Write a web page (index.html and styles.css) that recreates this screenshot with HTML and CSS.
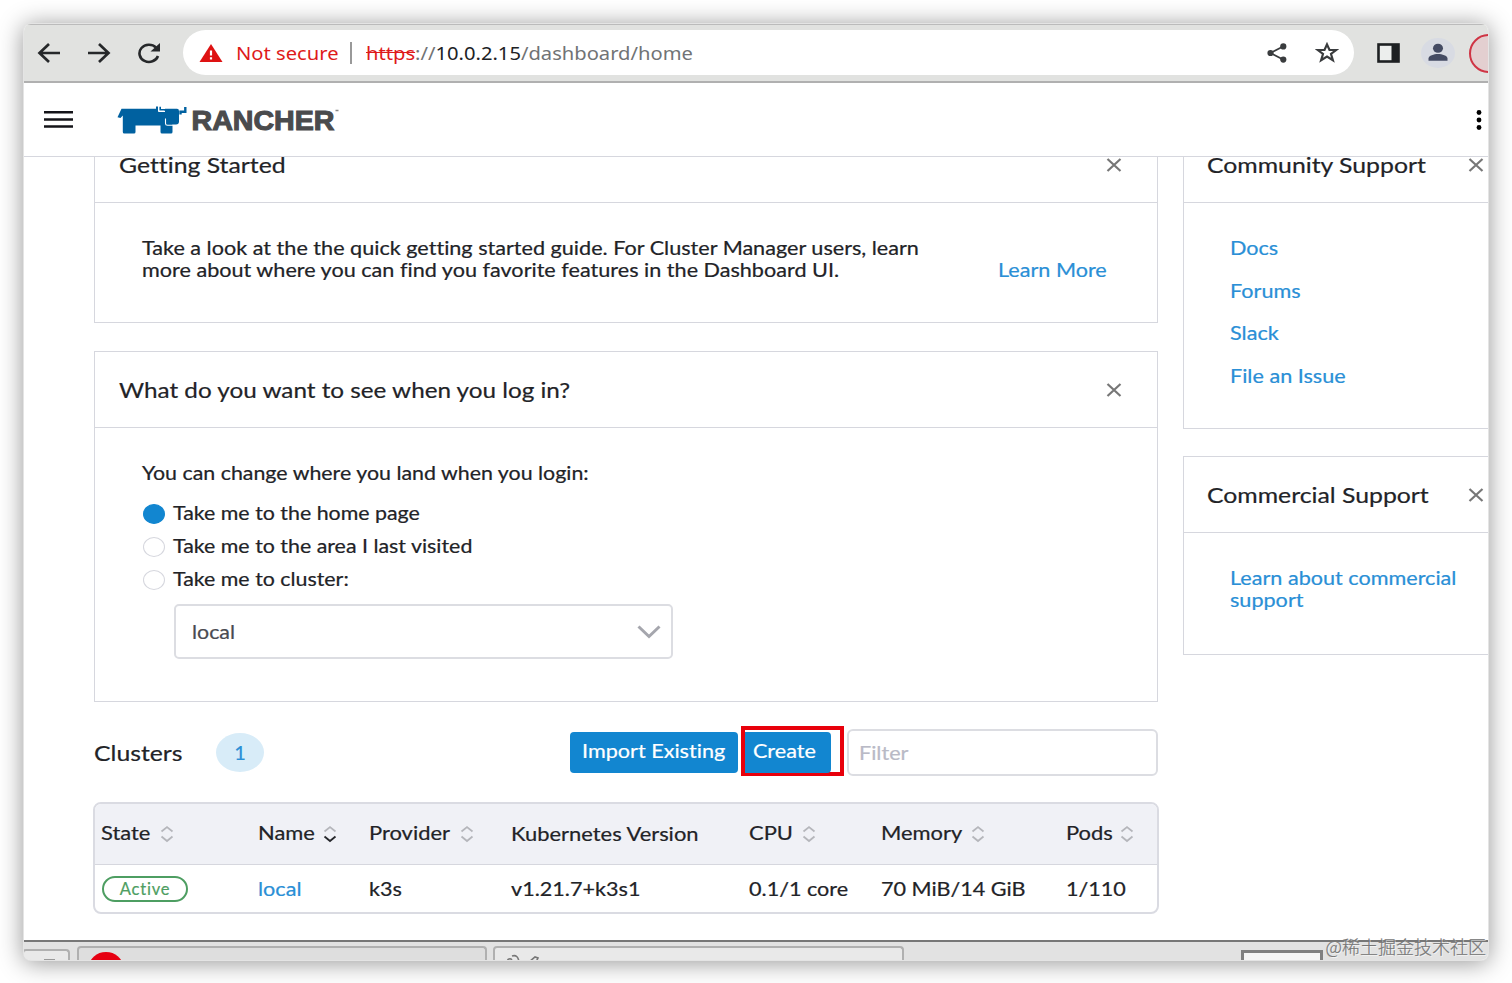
FILE: index.html
```
<!DOCTYPE html>
<html lang="en">
<head>
  <meta charset="UTF-8" />
  <meta name="viewport" content="width=device-width, initial-scale=1.0"/>
  <title>Rancher</title>
  <link rel="stylesheet" href="styles.css">
</head>
<body>
  <svg class="defs" width="0" height="0">
    <symbol id="close" viewBox="0 0 16 14"><path d="M1.5 1L14.5 13M14.5 1L1.5 13" fill="none" stroke="#777" stroke-width="2.2"/></symbol>
    <symbol id="sort" viewBox="0 0 14 18">
      <path d="M1.5 6.5L7 2L12.5 6.5" fill="none" stroke="#b5b6bb" stroke-width="1.7"/>
      <path d="M1.5 11.5L7 16L12.5 11.5" fill="none" stroke="currentColor" stroke-width="1.8"/>
    </symbol>
  </svg>

  <div class="window">
    <div class="toolbar">
      <svg class="nav-icon" width="24" height="22" viewBox="0 0 24 22"><path d="M23 11H3M12 2L2.5 11L12 20" fill="none" stroke="#26282a" stroke-width="2.7"/></svg>
      <svg class="nav-icon" width="24" height="22" viewBox="0 0 24 22"><path d="M1 11H21M12 2L21.5 11L12 20" fill="none" stroke="#26282a" stroke-width="2.7"/></svg>
      <svg class="nav-icon" width="24" height="22" viewBox="0 0 24 22"><path d="M21 14A9.5 8.6 0 1 1 19 5.5" fill="none" stroke="#26282a" stroke-width="2.6"/><path d="M23 1V9.5H13.5z" fill="#26282a"/></svg>

      <div class="address">
        <svg class="warning" width="24" height="18" viewBox="0 0 24 18"><path d="M12 0L23.5 18H.5z" fill="#de1212"/><path d="M12 6.5V11.5M12 13.3V15.5" stroke="#fff" stroke-width="2.2"/></svg>
        <span class="not-secure"><span class="wide">Not secure</span></span>
        <span class="divider"></span>
        <span class="url"><span class="wide"><s>https</s>://<b>10.0.2.15</b>/dashboard/home</span></span>
        <svg class="share" width="20" height="20" viewBox="0 0 20 20"><path d="M16.5 3.3L3.5 10L16.5 16.7" fill="none" stroke="#3a3c3e" stroke-width="1.8"/><circle cx="16.3" cy="3.4" r="3.1" fill="#3a3c3e"/><circle cx="3.5" cy="10" r="3.1" fill="#3a3c3e"/><circle cx="16.3" cy="16.6" r="3.1" fill="#3a3c3e"/></svg>
        <svg width="24" height="21" viewBox="0 0 24 21"><path d="M12 2.4L14.5 8H21.2L16 12L17.9 18.3L12 14.6L6.1 18.3L8 12L2.8 8H9.5z" fill="none" stroke="#3a3c3e" stroke-width="2.2"/></svg>
      </div>

      <svg class="panel-icon" width="23" height="20" viewBox="0 0 23 20"><rect x="1.5" y="1.5" width="20" height="17" fill="#eceeed" stroke="#1d2022" stroke-width="2.6"/><rect x="14.500" y="1" width="7.500" height="18" fill="#1d2022"/></svg>
      <svg class="avatar" width="34" height="30" viewBox="0 0 34 30"><ellipse cx="17" cy="15" rx="17" ry="15" fill="#d8dbe3"/><ellipse cx="17" cy="10.3" rx="5" ry="4.5" fill="#444b63"/><path d="M7.5 22.8V20.5C7.5 17.5 13 16 17 16S26.5 17.5 26.5 20.5V22.8z" fill="#444b63"/></svg>
      <div class="update-pill"></div>
    </div>

    <div class="header">
      <svg class="menu" width="29" height="19" viewBox="0 0 29 19"><path d="M0 2.3H29M0 9.5H29M0 16.5H29" stroke="#141419" stroke-width="2.6"/></svg>
      <svg class="logo" width="226" height="32" viewBox="0 0 226 32">
        <path d="M4.5 4.8H39V2.5H41V7.5H46Q48 7.500 48 4.800H60Q62 4.800 62 7V17.500Q62 20.500 59 20.500H55.500V28Q55.500 29.500 54 29.500H45Q43.500 29.500 43.500 28V21.500H18.500V28Q18.500 29.500 17 29.500H7.300Q5.800 29.500 5.800 28V11.500L3.500 14L.5 13.300z" fill="#0061a0"/>
        <path d="M42 2.5V7.500H48M48.500 14.500V19.500Q48.500 21.300 50.500 21.300H56" fill="none" stroke="#fff" stroke-width="1.1"/>
        <path d="M43.200 2.800V5.800H48" fill="none" stroke="#0061a0" stroke-width="1.600"/>
        <path d="M63.500 10.500V7.800H68.300V3" fill="none" stroke="#0061a0" stroke-width="2.4"/>
        <text x="74.5" y="26" textLength="143" lengthAdjust="spacingAndGlyphs">RANCHER</text>
        <path d="M218.500 6.500H221.500" stroke="#888" stroke-width="1.400"/>
      </svg>
      <svg class="kebab" width="6" height="20" viewBox="0 0 6 20"><circle cx="3" cy="2.5" r="2.4"/><circle cx="3" cy="10" r="2.4"/><circle cx="3" cy="17.5" r="2.4"/></svg>
    </div>

    <div class="page">
      <div class="main">
        <div class="card getting-started">
          <div class="card-header"><h2>Getting Started</h2><svg class="close"><use href="#close"/></svg></div>
          <div class="card-body">
            <p class="wide">Take a look at the the quick getting started guide. For Cluster Manager users, learn<br>more about where you can find you favorite features in the Dashboard UI.</p>
            <a class="learn-more wide">Learn More</a>
          </div>
        </div>

        <div class="card login">
          <div class="card-header"><h2>What do you want to see when you log in?</h2><svg class="close"><use href="#close"/></svg></div>
          <div class="card-body">
            <p class="wide">You can change where you land when you login:</p>
            <div class="options">
              <label class="option"><i class="radio checked"></i><span class="wide">Take me to the home page</span></label>
              <label class="option"><i class="radio"></i><span class="wide">Take me to the area I last visited</span></label>
              <label class="option"><i class="radio"></i><span class="wide">Take me to cluster:</span></label>
            </div>
            <div class="select">
              <span class="wide">local</span>
              <svg width="24" height="14" viewBox="0 0 24 14"><path d="M1.5 1.5L12 11.5L22.5 1.5" fill="none" stroke="#a5a6ad" stroke-width="3"/></svg>
            </div>
          </div>
        </div>

        <div class="clusters-bar">
          <h2>Clusters</h2>
          <span class="count">1</span>
          <div class="actions">
            <button class="btn import"><span class="wide">Import Existing</span></button>
            <div class="highlight"><button class="btn create"><span class="wide">Create</span></button></div>
            <div class="filter"><span class="wide">Filter</span></div>
          </div>
        </div>

        <div class="table">
          <div class="row head">
            <div><span class="wide">State</span><svg class="sort sort-state"><use href="#sort"/></svg></div>
            <div><span class="wide">Name</span><svg class="sort sort-name"><use href="#sort"/></svg></div>
            <div><span class="wide">Provider</span><svg class="sort sort-provider"><use href="#sort"/></svg></div>
            <div class="plain"><span class="wide">Kubernetes Version</span></div>
            <div><span class="wide">CPU</span><svg class="sort sort-cpu"><use href="#sort"/></svg></div>
            <div><span class="wide">Memory</span><svg class="sort sort-memory"><use href="#sort"/></svg></div>
            <div><span class="wide">Pods</span><svg class="sort sort-pods"><use href="#sort"/></svg></div>
          </div>
          <div class="row">
            <div><span class="badge">Active</span></div>
            <div><a class="wide">local</a></div>
            <div><span class="wide">k3s</span></div>
            <div><span class="wide">v1.21.7+k3s1</span></div>
            <div><span class="wide">0.1/1 core</span></div>
            <div><span class="wide">70 MiB/14 GiB</span></div>
            <div><span class="wide">1/110</span></div>
          </div>
        </div>
      </div>

      <div class="side">
        <div class="card community">
          <div class="card-header"><h2>Community Support</h2><svg class="close"><use href="#close"/></svg></div>
          <div class="card-body">
            <a class="wide">Docs</a>
            <a class="wide">Forums</a>
            <a class="wide">Slack</a>
            <a class="wide">File an Issue</a>
          </div>
        </div>
        <div class="card commercial">
          <div class="card-header"><h2>Commercial Support</h2><svg class="close"><use href="#close"/></svg></div>
          <div class="card-body"><a class="wide">Learn about commercial<br>support</a></div>
        </div>
      </div>
    </div>

    <div class="taskbar">
      <div class="task small"><i class="dash"></i></div>
      <div class="task active"><i class="dot"></i></div>
      <div class="task second"><svg width="34" height="10" viewBox="0 0 34 10"><path d="M1 10Q2 6 5 7L7 10M6 4Q12 2 13 10M23 10L29 5L32 6L30 10" fill="none" stroke="#777" stroke-width="1.6"/></svg></div>
      <div class="workspace"></div>
    </div>
  </div>
  <div class="watermark">@稀土掘金技术社区</div>
</body>
</html>
```
FILE: styles.css
```
* {
  box-sizing: border-box;
}
body {
  margin: 0;
  padding: 24px;
  height: 983px;
  overflow: hidden;
  background: #fff;
  color: #222327;
  font-family: Lato, sans-serif;
  font-size: 18.5px;
  font-variant-ligatures: none;
  line-height: 22px;
  -webkit-text-stroke: 0.2px;
}
h2, p {
  margin: 0;
  font-weight: normal;
}
a {
  color: #2a8fd6;
}
svg {
  flex: none;
}
.defs {
  position: absolute;
}
/* the dashboard is displayed stretched horizontally */
.wide {
  display: inline-block;
  white-space: nowrap;
  transform: scaleX(1.168);
  transform-origin: left center;
}
.window {
  display: flex;
  flex-direction: column;
  width: 1464px;
  height: 936px;
  overflow: hidden;
  border-radius: 7px;
  background: #fff;
  box-shadow: 0 0 0 1px #e4e4e4, 0 2px 25px 1px rgba(0, 0, 0, 0.42);
}

/* browser toolbar */
.toolbar {
  display: flex;
  align-items: center;
  flex: none;
  height: 59px;
  padding-left: 13px;
  border-top: 1px solid #bbb;
  border-bottom: 2px solid #b0b0b0;
  background: #e1e2e0;
}
.toolbar > svg {
  margin-bottom: 1px;
}
.nav-icon {
  margin-right: 26px;
}
.address {
  display: flex;
  align-items: center;
  flex: none;
  width: 1171px;
  height: 45px;
  margin-left: -4px;
  margin-bottom: 1px;
  padding-left: 16px;
  border-radius: 23px;
  background: #fff;
  font-family: "Noto Sans", sans-serif;
  font-size: 18.5px;
  -webkit-text-stroke: 0;
}
.address .wide {
  transform: scaleX(1.09);
}
.not-secure {
  flex: none;
  width: 114px;
  margin-left: 13px;
  color: #de1a1a;
}
.divider {
  flex: none;
  width: 2px;
  height: 22px;
  background: #999;
}
.url {
  flex: none;
  width: 900px;
  margin-left: 14px;
  color: #717375;
}
.url s {
  color: #de1a1a;
}
.url b {
  color: #202124;
  font-weight: normal;
}
.share {
  margin-right: 28px;
  margin-left: 1px;
}
.panel-icon {
  margin-left: 23px;
}
.avatar {
  margin-left: 21px;
}
.update-pill {
  flex: none;
  width: 80px;
  height: 39px;
  margin-left: 14px;
  border: 2px solid #cf3545;
  border-radius: 20px;
  background: #e3cfd0;
}

/* rancher header */
.header {
  display: flex;
  align-items: center;
  flex: none;
  height: 74px;
  padding-left: 20px;
  border-bottom: 1px solid #d6d7de;
}
.logo {
  margin-left: 44px;
}
.logo text {
  font: bold 28px "Liberation Sans", Arial, sans-serif;
  fill: #4a4b4d;
  stroke: #4a4b4d;
  stroke-width: 1.1px;
}
.kebab {
  margin-left: 1133px;
}

/* page */
.page {
  display: flex;
  flex: none;
  gap: 25px;
  height: 783px;
  padding-left: 70px;
  overflow: hidden;
}
.main {
  flex: none;
  width: 1064px;
  margin-top: -31px;
}
.side {
  flex: none;
  width: 330px;
  margin-top: -31px;
}
.card {
  border: 1px solid #d6d7de;
}
.card-header {
  display: flex;
  align-items: center;
  justify-content: space-between;
  height: 76px;
  padding: 0 35px 0 24px;
  border-bottom: 1px solid #d6d7de;
}
h2 {
  font-size: 21px;
  line-height: 17px;
  white-space: nowrap;
  transform: scaleX(1.18);
  transform-origin: left center;
}
.close {
  width: 16px;
  height: 14px;
}
.card-body {
  padding: 34px 47px;
}
.getting-started {
  height: 197px;
}
.getting-started .card-body {
  display: flex;
  align-items: flex-end;
}
.getting-started p {
  width: 856px;
}
.learn-more {
  flex: none;
}
.login {
  height: 351px;
  margin-top: 28px;
}
.login h2 {
  transform: scaleX(1.155);
}
.login .wide {
  transform: scaleX(1.155);
}
.options {
  margin-top: 12px;
}
.option {
  display: flex;
  align-items: center;
  height: 33px;
}
.radio {
  width: 22px;
  height: 20px;
  margin: 2px 8px 0 1px;
  border: 1px solid #d6d7de;
  border-radius: 50%;
}
.radio.checked {
  border-color: #1286d0;
  background: #1286d0;
}
.select {
  display: flex;
  align-items: center;
  justify-content: space-between;
  width: 499px;
  height: 55px;
  margin: 9px 0 0 32px;
  padding: 0 10px 0 16px;
  border: 2px solid #dcdde2;
  border-radius: 5px;
  color: #4a4b52;
}
.community {
  height: 303px;
}
.community .card-body {
  display: flex;
  flex-direction: column;
  gap: 20.5px;
}
.commercial {
  height: 199px;
  margin-top: 27px;
}
.side .card-header {
  padding-left: 23px;
  padding-right: 28px;
}
.side .card-body {
  padding-left: 46px;
}

/* clusters */
.clusters-bar {
  display: flex;
  align-items: center;
  height: 50px;
  margin-top: 24px;
}
.clusters-bar h2 {
  width: 122px;
  padding-top: 3px;
}
.count {
  width: 48px;
  height: 39px;
  margin-top: 2px;
  border-radius: 50%;
  background: #d8ecf8;
  color: #2a8fd6;
  font-size: 20px;
  line-height: 39px;
  text-align: center;
}
.actions {
  display: flex;
  align-items: center;
  margin-left: 306px;
}
.btn {
  height: 41px;
  margin-top: 2px;
  padding: 0 0 2px 12px;
  border: 0;
  border-radius: 4px;
  background: #1286d0;
  color: #fff;
  font: inherit;
  text-align: left;
}
.import {
  width: 168px;
}
.highlight {
  display: flex;
  align-items: center;
  width: 103px;
  height: 50px;
  margin-left: 3px;
  border: 4px solid #e8000b;
}
.create {
  width: 86px;
  padding-left: 8px;
  border-radius: 0 4px 4px 0;
}
.filter {
  width: 311px;
  height: 47px;
  margin: 2px 0 0 3px;
  padding-left: 10px;
  border: 2px solid #dcdde2;
  border-radius: 6px;
  color: #b9bac6;
  line-height: 44px;
}
.table {
  width: 1066px;
  height: 112px;
  margin: 26px 0 0 -1px;
  border: 2px solid #dadbe2;
  border-radius: 8px;
  overflow: hidden;
}
.row {
  display: grid;
  grid-template-columns: 157px 111px 142px 238px 132px 185px 90px;
  align-items: center;
  height: 48px;
  padding-left: 6px;
}
.row.head {
  height: 61px;
  padding-bottom: 3px;
  border-bottom: 1px solid #d6d7de;
  background: #f0f1f6;
}
.row > div {
  display: flex;
  align-items: center;
}
.row .plain {
  padding-top: 2px;
}
.sort {
  width: 14px;
  height: 18px;
  margin-top: 2px;
  color: #b5b6bb;
}
.head .wide {
  transform: scaleX(1.185);
}
.sort-state { margin-left: 17px; }
.sort-name { margin-left: 17px; color: #26272b; }
.sort-provider { margin-left: 23px; }
.sort-cpu { margin-left: 16px; }
.sort-memory { margin-left: 21px; }
.sort-pods { margin-left: 15px; }
.badge {
  width: 86px;
  height: 26px;
  margin-left: 1px;
  border: 2px solid #4e9e62;
  border-radius: 13px;
  color: #4e9e62;
  font-size: 16.5px;
  letter-spacing: 0.8px;
  line-height: 23px;
  text-align: center;
}

/* desktop panel under the browser */
.taskbar {
  display: flex;
  align-items: flex-start;
  flex: none;
  height: 20px;
  border-top: 2px solid #777;
  background: #e2e2e2;
}
.task {
  height: 20px;
  border: 2px solid #b0b0b0;
  border-bottom: 0;
  border-radius: 4px 4px 0 0;
  background: #e9e9e9;
}
.task.small {
  width: 48px;
  margin: 7px 7px 0 -2px;
  padding: 8px 0 0 20px;
}
.dash {
  display: block;
  width: 11px;
  height: 3px;
  background: #999;
}
.task.active {
  width: 410px;
  margin: 4px 6px 0 0;
  padding: 4px 0 0 10px;
  overflow: hidden;
  background: #dedede;
}
.dot {
  display: block;
  width: 34px;
  height: 30px;
  border-radius: 50%;
  background: #e60012;
}
.task.second {
  width: 411px;
  margin-top: 4px;
  padding-left: 11px;
}
.task.second svg {
  display: block;
  margin-top: 4px;
}
.workspace {
  width: 82px;
  height: 20px;
  margin: 8px 0 0 337px;
  border: 3px solid #808080;
  background: #f5f5f5;
}
.watermark {
  position: absolute;
  right: 26px;
  bottom: 25px;
  color: #777;
  font: 300 18px/24px "Noto Sans CJK SC", sans-serif;
  text-shadow: 1px 1px 0 rgba(255, 255, 255, 0.6);
}
```
